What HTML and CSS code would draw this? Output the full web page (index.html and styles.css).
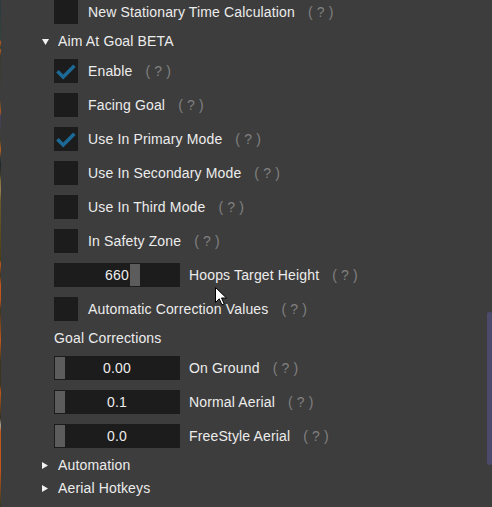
FILE: index.html
```html
<!DOCTYPE html>
<html>
<head>
<meta charset="utf-8">
<link rel="stylesheet" href="styles.css">
</head>
<body>
<div class="edge"></div>
<div class="panel">
  <div class="group">
    <div class="row"><div class="check"></div><span class="label">New Stationary Time Calculation</span><span class="help">( ? )</span></div>
  </div>
  <div class="tree open">
    <svg class="arrow" width="8" height="15" viewBox="0 0 8 15"><polygon points="0,5 7,5 3.5,11" fill="#f2f2f2"/></svg>
    <span class="tree-label">Aim At Goal BETA</span>
  </div>
  <div class="group">
    <div class="row"><div class="check"><svg width="24" height="24" viewBox="0 0 24 24"><polyline points="3.4,12.2 9.2,18 20.4,6.8" fill="none" stroke="#1c6995" stroke-width="3.6"/></svg></div><span class="label">Enable</span><span class="help">( ? )</span></div>
    <div class="row"><div class="check"></div><span class="label">Facing Goal</span><span class="help">( ? )</span></div>
    <div class="row"><div class="check"><svg width="24" height="24" viewBox="0 0 24 24"><polyline points="3.4,12.2 9.2,18 20.4,6.8" fill="none" stroke="#1c6995" stroke-width="3.6"/></svg></div><span class="label">Use In Primary Mode</span><span class="help">( ? )</span></div>
    <div class="row"><div class="check"></div><span class="label">Use In Secondary Mode</span><span class="help">( ? )</span></div>
    <div class="row"><div class="check"></div><span class="label">Use In Third Mode</span><span class="help">( ? )</span></div>
    <div class="row"><div class="check"></div><span class="label">In Safety Zone</span><span class="help">( ? )</span></div>
    <div class="row"><div class="slider"><span class="value">660</span><div class="grab" style="left:76px"></div></div><span class="slabel">Hoops Target Height</span><span class="help">( ? )</span></div>
    <div class="row"><div class="check"></div><span class="label">Automatic Correction Values</span><span class="help">( ? )</span></div>
    <div class="text">Goal Corrections</div>
    <div class="row"><div class="slider"><span class="value">0.00</span><div class="grab" style="left:1px"></div></div><span class="slabel">On Ground</span><span class="help">( ? )</span></div>
    <div class="row"><div class="slider"><span class="value">0.1</span><div class="grab" style="left:1px"></div></div><span class="slabel">Normal Aerial</span><span class="help">( ? )</span></div>
    <div class="row"><div class="slider"><span class="value">0.0</span><div class="grab" style="left:1px"></div></div><span class="slabel">FreeStyle Aerial</span><span class="help">( ? )</span></div>
  </div>
  <div class="tree">
    <svg class="arrow" width="8" height="15" viewBox="0 0 8 15"><polygon points="0,4 6,7.5 0,11" fill="#f2f2f2"/></svg>
    <span class="tree-label">Automation</span>
  </div>
  <div class="tree last">
    <svg class="arrow" width="8" height="15" viewBox="0 0 8 15"><polygon points="0,4 6,7.5 0,11" fill="#f2f2f2"/></svg>
    <span class="tree-label">Aerial Hotkeys</span>
  </div>
</div>
<div class="scrollbar"></div>
<svg class="cursor" width="13" height="19" viewBox="0 0 13 19"><path d="M0.5,0.5 L0.5,15.5 L4.2,11.8 L7,17.8 L9.2,16.8 L6.5,11 L11.5,11 Z" fill="#fff" stroke="#000" stroke-width="1"/></svg>
</body>
</html>
```

FILE: styles.css
```css
html, body {
  margin: 0;
  padding: 0;
  height: 100%;
}
body {
  background: #3d3d3d;
  color: #ececec;
  font-family: "Liberation Sans", Arial, sans-serif;
  font-size: 14px;
  line-height: 15px;
  letter-spacing: 0.15px;
  display: flex;
  overflow: hidden;
  position: relative;
}
.edge {
  width: 1px;
  flex: none;
  background: linear-gradient(to bottom,
    #2c3a3c 0px, #33433f 40px, #c25a1c 42px, #2f3b36 48px, #b75a20 50px, #3a3a30 56px,
    #3b3f3c 100px, #b0561f 112px, #4a3d60 116px, #3a4030 140px, #c0601e 150px, #2e3a3a 158px,
    #20262a 165px, #3b3a2a 175px, #7a6a3a 180px, #9a8050 190px, #6a5a2a 200px, #5c4e1c 230px,
    #4b3d15 260px, #c4571a 264px, #3a3520 275px, #c9581a 285px, #bf5518 300px, #3a3522 310px,
    #c4561a 340px, #3a3520 362px, #3c3522 385px, #c25818 392px, #302e22 418px, #a8a090 425px,
    #c0581a 432px, #c4561a 470px, #3a3a20 505px);
}
.panel {
  flex: 1;
  padding-left: 41px;
}
.group {
  padding-left: 12px;
}
.row {
  display: flex;
  align-items: center;
  height: 24px;
  margin-bottom: 10px;
  white-space: nowrap;
}
.check {
  width: 24px;
  height: 24px;
  background: #1c1c1c;
  flex: none;
}
.check svg {
  display: block;
}
.label {
  margin-left: 10px;
}
.slabel {
  margin-left: 9px;
}
.help {
  margin-left: 13px;
  color: #808080;
}
.slider {
  position: relative;
  width: 126px;
  height: 24px;
  background: #1c1c1c;
  flex: none;
  display: flex;
  align-items: center;
  justify-content: center;
}
.value {
  position: relative;
  z-index: 0;
}
.grab {
  position: absolute;
  top: 1px;
  bottom: 1px;
  width: 10px;
  background: #5c5c5c;
}
.text {
  height: 15px;
  margin-bottom: 10px;
}
.tree {
  display: flex;
  align-items: center;
  height: 15px;
  margin-bottom: 10px;
}
.tree.last {
  margin-bottom: 0;
  margin-top: -2px;
}
.arrow {
  display: block;
  flex: none;
}
.tree-label {
  margin-left: 8px;
}
.scrollbar {
  position: absolute;
  right: 0;
  top: 312px;
  width: 5px;
  height: 153px;
  border-radius: 2px;
  background: #4b4a6b;
}
.cursor {
  position: absolute;
  left: 215px;
  top: 287px;
}
```
